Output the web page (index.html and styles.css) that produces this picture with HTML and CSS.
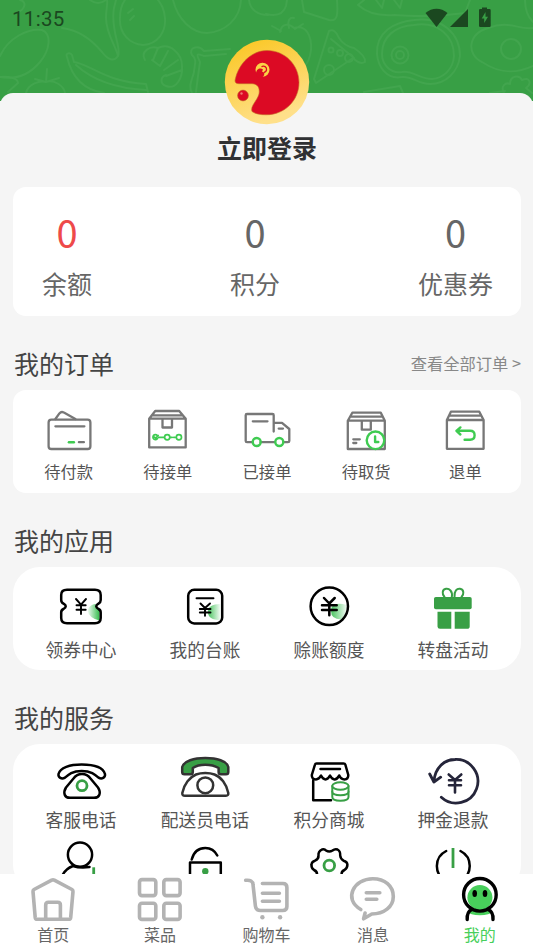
FILE: index.html
```html
<!DOCTYPE html>
<html lang="zh-CN">
<head>
<meta charset="utf-8">
<title>我的</title>
<link rel="stylesheet" href="styles.css">
</head>
<body>
<div class="screen">
  <header class="hero">
    <svg class="pattern" viewBox="0 0 533 101" fill="none">
      <path d="M0 56C8 38 28 28 42 30C52 34 50 50 40 62C30 74 16 80 0 77"/>
      <path d="M62 28C78 30 92 40 102 52C108 60 114 62 118 56C116 46 106 34 106 18C106 8 108 4 107 0M118 56C122 48 110 30 114 8L116 0"/>
      <path d="M120 18C119 34 130 44 143 45C158 44 166 32 165 18C164 8 161 4 158 0M120 18C120 8 122 4 125 0M128 13L133 9M130 20L134 16"/>
      <path d="M173 0C178 20 192 33 207 33C224 32 240 20 241 0M249 0C250 10 258 15 268 15"/>
      <path d="M67 57C65 53 70 52 72 55L74 62C90 64 105 82 146 84L148 92M67 57C72 78 84 90 104 93M76 65C88 76 108 88 146 90"/>
      <path d="M145 60C140 52 150 45 158 48C170 42 182 54 182 66C183 78 176 90 166 86C160 84 160 77 166 75M158 48L153 60M168 51L160 66L152 60M178 60L164 70M182 70L166 76"/>
      <path d="M230 49L204 51C198 44 188 48 192 55C198 60 194 66 194 72C192 80 188 86 192 93M226 54L204 56C198 54 195 52 200 62L198 76L196 92"/>
      <path d="M26 93C28 84 40 80 46 82C54 79 64 86 65 93M35 79L46 82L59 78M46 82L47 69M0 77C8 76 18 78 18 83L8 92M20 0C28 2 24 10 18 12M90 0Q98 6 106 0"/>
      <path d="M280 32C282 22 290 24 294 28C306 24 312 36 311 50C310 58 307 64 304 66M289 28C287 20 290 17 294 18M281 31L272 26M295 29L303 24"/>
      <path d="M329 31Q335 28 339 38Q344 46 354 48Q366 56 365 62Q360 65 353 58L316 83L314 79Z M331 39L354 58"/>
      <circle cx="349" cy="58" r="4"/><circle cx="329" cy="70" r="5"/><circle cx="340" cy="53" r="3"/><circle cx="331" cy="50" r="2.5"/>
      <path d="M377 54C376 32 394 22 414 20C442 16 460 34 460 56C458 72 446 84 430 84C418 84 412 76 402 77C386 80 378 66 377 54Z M382 54C382 36 396 26 414 25C438 21 454 36 454 56C453 70 443 78 432 79C420 79 412 70 402 72C390 74 382 64 382 54Z"/>
      <circle cx="400" cy="55" r="8.500"/><circle cx="400" cy="55" r="4"/>
      <path d="M533 28C518 30 510 20 488 28C468 34 466 54 482 62C500 74 516 74 533 66"/><circle cx="511" cy="49" r="10"/>
      <path d="M358 5C368 14 380 16 394 15Q430 18 465 13L470 0M358 5L364 0M376 0L382 8L384 0M394 0L400 8L402 0M302 0L304 12L329 20C338 22 338 14 337 0M266 14Q282 18 286 6L287 0"/>
      <path d="M364 92L400 86L403 93M504 93C500 86 506 82 510 84C510 76 519 74 522 80C530 76 532 84 526 88L532 93M490 93L505 91M525 0Q525 14 533 22"/>
    </svg>
    <div class="status">
      <span class="clock">11:35</span>
      <svg class="signals" width="68" height="22" viewBox="425 6 68 22" fill="#1b4820">
        <path d="M426.500 13C433 7.300 442 7.300 448.500 13L437.500 27Z"/>
        <path d="M469 9V27H451Z"/>
        <path fill-rule="evenodd" d="M483 7.500H488V9H490.500Q491.700 9 491.700 10.200V25.800Q491.700 27 490.500 27H481.200Q480 27 480 25.800V10.200Q480 9 481.200 9H483ZM486.500 12L482.700 18.500H485.200V23L489 16.700H486.500Z"/>
      </svg>
    </div>
  </header>

  <main class="sheet">
    <div class="profile">
      <svg class="avatar" width="86" height="86" viewBox="224 39 86 86">
        <defs><linearGradient id="gold" x1="0" y1="0" x2=".4" y2="1"><stop offset="0" stop-color="#fac51c"/><stop offset="1" stop-color="#ffe08a"/></linearGradient></defs>
        <circle cx="267" cy="82" r="42.200" fill="url(#gold)"/>
        <path fill="#dc0a24" stroke="#c66b28" stroke-width=".6" d="M235.300 79C239 63 252 50.500 267 50.500C285 50.500 299 65 299 82.500C299 101 284 115 266 114.800C260 114.800 255 113.800 252 111.500C250 106 257 101 259 94C260 88 258 84 252 83.700H239C235.500 83.700 234.500 82 235.300 79Z"/>
        <circle cx="243" cy="95.500" r="5.400" fill="#dc0a24" stroke="#bd6828" stroke-width=".6"/>
        <circle cx="241.500" cy="93.500" r="1.200" fill="#ef7770"/>
        <circle cx="262.500" cy="69.800" r="7" fill="#fad347"/>
        <path fill="#dc0a24" d="M256 73.500C256 69 260.500 67 263 69.500L262 71.500L264 72.500C265.500 76 261 79.500 258 77.500C256.500 76.500 256 75 256 73.500Z"/>
        <path fill="none" stroke="#dc0a24" stroke-width="1.300" d="M261.500 66.800C264 65.200 267 67 266.500 70C266.200 71.500 265.300 72.300 264 72.500"/>
      </svg>
      <h1 class="login">立即登录</h1>
    </div>

    <section class="card stats">
      <div class="stat stat-hot"><b>0</b><span>余额</span></div>
      <div class="stat"><b>0</b><span>积分</span></div>
      <div class="stat"><b>0</b><span>优惠券</span></div>
    </section>

    <div class="heading"><h2>我的订单</h2><a class="more">查看全部订单 &gt;</a></div>
    <section class="card orders">
      <div class="cell">
        <svg class="ico gray" viewBox="38.600 400 60 60"><path d="M55 419L59 413.400Q61 411 63.500 412.600L75 419"/><rect x="48.200" y="419.700" width="41.800" height="29.300" rx="2.800"/><path d="M55 426.300H84M78.500 442.200H83.500"/><path class="g" d="M68.500 442.200H73.500"/></svg>
        <span>待付款</span>
      </div>
      <div class="cell">
        <svg class="ico gray" viewBox="137.800 400 60 60"><path d="M149 418.700L155 411H179L185.500 418.700V447.400H149ZM149 418.700H185.500M152.500 415.300H182M162.300 418.700V427.500H171.800V418.700"/><path class="g thin" d="M157 435.300A2.500 2.500 0 1 0 157.300 438.500M154 437L155.500 438L158 435.500M158.500 437.300H164M170 437.300H172M173.500 437.300H175"/><g class="g thin"><circle cx="167" cy="437.300" r="2.600"/><circle cx="178.700" cy="437.300" r="2.600"/></g></svg>
        <span>待接单</span>
      </div>
      <div class="cell">
        <svg class="ico gray" viewBox="237 400 60 60"><path d="M252.500 442.200H247Q245.700 442.200 245.700 441V415.200Q245.700 414 247 414H272.500Q273.700 414 273.700 415.200V431.500M260.500 442.200H275M273.700 422.800H282L289.300 429V441Q289.300 442.200 288 442.200H283.500M252.800 421.300H267.500M278.700 428.600H283"/><g class="g"><circle cx="256.700" cy="442" r="4"/><circle cx="279.300" cy="442" r="4"/></g></svg>
        <span>已接单</span>
      </div>
      <div class="cell">
        <svg class="ico gray" viewBox="336.200 400 60 60"><path d="M348 420.700L352.500 412.700H381L385 420.700V449H348ZM348 420.700H385M351 416.700H382M362 420.700V429.700H371V420.700M353.500 439.300H360M353.500 443H356.500"/><circle class="g" cx="375.700" cy="440.300" r="8.800" fill="#fff"/><path class="g" d="M375.300 436.500V442H378.500"/></svg>
        <span>待取货</span>
      </div>
      <div class="cell">
        <svg class="ico gray" viewBox="435.400 400 60 60"><path d="M447.300 420L451.300 411.700H479.700L484 420V448.800H447.300ZM447.300 420H484M450 415.700H481.500"/><path class="g" d="M460.800 427.400L456.800 430.800L460.800 434.500M457 430.800H470.500Q475 430.800 475 435.200Q475 439.700 470.500 439.700H465"/></svg>
        <span>退单</span>
      </div>
    </section>

    <div class="heading"><h2>我的应用</h2></div>
    <section class="card round apps">
      <div class="cell">
        <svg class="ico" viewBox="51 576 60 60">
          <defs>
            <linearGradient id="glow"><stop offset="0" stop-color="#35bd4d" stop-opacity=".05"/><stop offset="1" stop-color="#35bd4d"/></linearGradient>
            <linearGradient id="glowBack"><stop offset="0" stop-color="#35bd4d" stop-opacity=".9"/><stop offset="1" stop-color="#35bd4d" stop-opacity=".05"/></linearGradient>
          </defs>
          <path fill="url(#glow)" stroke="none" d="M95.500 604Q90 604.500 87.500 610Q88.500 618 99.500 620.500V611L96 606.500Z"/>
          <path d="M67 589.800H95Q100.700 589.800 100.700 595V600Q100.700 602.500 98.500 603.700Q94 606.300 98.500 609Q100.700 610 100.700 612.500V618Q100.700 623.200 95 623.200H67Q61.200 623.200 61.200 618V612.500Q61.200 610 63.500 609Q68 606.300 63.500 603.700Q61.200 602.500 61.200 600V595Q61.200 589.800 67 589.800Z"/>
          <path d="M76 599L81 604.700L86 599M81 604.700V614M76.500 605.300H85.700M76.500 609.700H85.700" stroke-width="1.900"/>
        </svg>
        <span>领券中心</span>
      </div>
      <div class="cell">
        <svg class="ico" viewBox="175 576 60 60">
          <path fill="url(#glowBack)" stroke="none" d="M220.500 604Q208 604 208 612Q208 620 220.500 620Z"/>
          <rect x="188.200" y="589.800" width="34" height="33.600" rx="6"/>
          <path d="M196.500 598.300H213.500M200.500 603.500L205 608L210 603.500M205 608V615.700M199.800 609H210.500M199.800 612.500H210.500" stroke-width="1.900"/>
        </svg>
        <span>我的台账</span>
      </div>
      <div class="cell">
        <svg class="ico" viewBox="299 576 60 60">
          <path fill="url(#glowBack)" stroke="none" d="M347 605Q331 601 331 611Q331 619 341 619.500Q346 616 347 605Z"/>
          <circle cx="329.300" cy="606.300" r="18.700"/>
          <path d="M324 598L329.300 603.500L334.700 598M329.300 603.500V615.300M322 605.300H336.700M322 610H336.700" stroke-width="2.500"/>
        </svg>
        <span>赊账额度</span>
      </div>
      <div class="cell">
        <svg class="ico" viewBox="423 576 60 60"><g fill="#389f45" stroke="none"><rect x="434" y="597" width="37.700" height="12.300" rx="1.800"/><path d="M437.500 611.700H451.300V628.800H440Q437.500 628.800 437.500 626.500ZM454.700 611.700H469.700V626.500Q469.700 628.800 467 628.800H454.700Z"/></g><path stroke="#389f45" stroke-width="2" d="M451.800 597C453 591 449 588.300 446 588.800C442 589.500 441.800 594 444.500 597M454.500 597C454 591 457 588.300 460 588.800C464 589.500 464.300 594 461.500 597"/></svg>
        <span>转盘活动</span>
      </div>
    </section>

    <div class="heading"><h2>我的服务</h2></div>
    <section class="card round services">
      <div class="cell">
        <svg class="ico" viewBox="51 748 60 60"><path d="M58.500 774C60 767.500 70 764.500 81.700 764.500S103 767.500 105 774C105.500 777.500 102 779.700 98.500 777.700C95 774.500 91 771 81.700 771S68.500 774.500 65 777.700C61.500 779.700 58 777.500 58.500 774Z"/><path d="M82 774C86.500 774 88.500 775.700 90.500 778.500L98 787.500C101.500 793 99.500 797.800 94 797.800H70C64.500 797.800 62.700 793 66 787.500L73.500 778.500C75.500 775.700 77.500 774 82 774Z"/><circle class="leaf" cx="82" cy="785.700" r="5"/></svg>
        <span>客服电话</span>
      </div>
      <div class="cell">
        <svg class="ico dark" viewBox="175 748 60 60"><path fill="#389f45" d="M182.200 772V767C184 761 194 758 205.300 758S227 761 228.300 767V772Q228.300 774.300 226 774.300H221Q218.600 774.300 218.600 772V768Q213 764.800 205.300 764.800T192.800 768V772Q192.800 774.300 190.500 774.300H184.500Q182.200 774.300 182.200 772Z"/><path d="M182.300 793C184 784 190 777 196 774.500Q200 773 205.300 773T214.500 774.500C221 777 226.500 784 228.300 793Q228.500 795.700 226 795.700H185Q182 795.700 182.300 793Z"/><circle cx="205.300" cy="785.300" r="7.900"/></svg>
        <span>配送员电话</span>
      </div>
      <div class="cell">
        <svg class="ico" viewBox="299 748 60 60"><path d="M316.500 763.400H343.500Q345 763.400 345.300 764.500L348.300 775Q348.300 779.400 344.500 779.400Q341 779.400 339.300 775.500Q337 779.400 334.500 779.400T330 775.500Q328 779.400 325.500 779.400T321 775.500Q319 779.400 316 779.400Q311.700 779.400 311.800 775L315 764.500Q315.300 763.400 316.500 763.400ZM320.500 768.900H340M313.200 780.500V800.300H331"/><g stroke="#389f45" stroke-width="2" fill="#fff"><path d="M332.300 786V797C332.300 802 348.500 802 348.500 797V786"/><path d="M332.300 791.500C332.300 796.400 348.500 796.400 348.500 791.500"/><ellipse cx="340.400" cy="786" rx="8.100" ry="3.700"/></g></svg>
        <span>积分商城</span>
      </div>
      <div class="cell">
        <svg class="ico navy" viewBox="423 748 60 60"><path d="M433.900 781.500C435 767.500 444.500 759.500 455 759.500A21.800 21.800 0 1 1 441.300 797.300M429.700 774L433.900 782L440.700 777.200" stroke-width="2.800"/><path d="M448.700 774.500L455 780L461.300 774.500M455 780V792.500M449 780.300H461M449 785.300H461"/></svg>
        <span>押金退款</span>
      </div>
      <div class="cell">
        <svg class="ico" viewBox="51 832 60 60"><circle cx="80" cy="854.700" r="12.100"/><path d="M62.500 875Q66 868.500 73 866Q80 868.300 89.500 867"/><path class="leaf" stroke-linecap="butt" d="M93.700 867.300V880"/></svg>
      </div>
      <div class="cell">
        <svg class="ico" viewBox="175 832 60 60"><path d="M191.700 859.500C194 851 199 848 205.300 848S215 851 217.300 855.500M190 885V862.600H220.800V885"/><circle cx="205.300" cy="871.200" r="3.200" fill="#389f45" stroke="none"/></svg>
      </div>
      <div class="cell">
        <svg class="ico" viewBox="299 832 60 60"><path d="M317 875Q317.500 871.500 314 870Q311 868 311.500 864.500Q311.800 861.500 315 860.700Q318.700 859 318.500 855.500Q318 851.500 322 849.500Q324.500 848.500 326 850.500Q329.300 852.500 332.500 850.500Q335 848.500 337.500 849.500Q340.500 851 340.200 855.500Q340.500 859 343.500 860.700Q347.200 861.500 347.400 864.500Q347.500 868 344.500 870Q341 871.500 341.700 875"/><circle class="leaf" cx="329.300" cy="865.500" r="5.300"/></svg>
      </div>
      <div class="cell">
        <svg class="ico" viewBox="423 832 60 60"><path d="M446.200 851A16.800 16.800 0 0 0 446 881M460.500 851A16.800 16.800 0 0 1 460.500 881"/><path class="leaf" stroke-linecap="butt" d="M453 848V868"/></svg>
      </div>
    </section>
  </main>

  <nav class="tabs">
    <div class="tab">
      <svg class="tab-ico" viewBox="28.300 874 50 50"><path d="M33.300 891.500Q33.100 890.300 34.300 889.500L52 880.200Q53.300 879.600 54.600 880.200L72.300 889.500Q73.500 890.300 73.300 891.500L71 917.500Q70.800 919.300 69 919.300H37.500Q35.700 919.300 35.500 917.500ZM46 919V905Q46 902.300 48.700 902.300H58Q60.700 902.300 60.700 905V919"/></svg>
      <span>首页</span>
    </div>
    <div class="tab">
      <svg class="tab-ico" viewBox="135 874 50 50"><rect x="139.500" y="879.600" width="16.300" height="16" rx="2.500"/><rect x="163.800" y="879.600" width="16.300" height="16" rx="2.500"/><rect x="139.500" y="903.200" width="16.300" height="16.200" rx="2.500"/><rect x="163.800" y="903.200" width="16.300" height="16.200" rx="2.500"/></svg>
      <span>菜品</span>
    </div>
    <div class="tab">
      <svg class="tab-ico" viewBox="241.600 874 50 50"><path d="M246.300 880.300Q253.300 879.500 253.600 884.500L256 906Q256.500 910.500 261 910.500H283.300Q287.500 910.500 287.500 906.500V887.500Q287.500 883.500 283.500 883.500H263M263 893.300H280M263 901.300H280"/><circle class="dot" cx="263" cy="917.300" r="2.200"/><circle class="dot" cx="280.700" cy="917.300" r="2.200"/></svg>
      <span>购物车</span>
    </div>
    <div class="tab">
      <svg class="tab-ico" viewBox="348.200 874 50 50"><path d="M361 909.500C343 899 354 878.700 373 878.700C385 878.700 393.500 886 393.500 896.500C393.500 907 384 914 372 914L363.800 918.800L365.300 913"/><path d="M366.500 892.700H380M366.500 899.300H377"/></svg>
      <span>消息</span>
    </div>
    <div class="tab tab-active">
      <svg class="tab-ico" viewBox="454.800 874 50 50"><ellipse cx="479.700" cy="912" rx="11.500" ry="3.200" fill="#48cf5b" stroke="none"/><circle cx="479.700" cy="897.500" r="12.500" fill="#48cf5b" stroke="none"/><g stroke="#000" stroke-width="3.400"><circle cx="479.700" cy="894.800" r="16.300"/><path d="M467 919.500Q466.500 912 471.500 909.500M492.800 919.500Q493.300 912 488 909.500"/></g><g fill="#000" stroke="none"><ellipse cx="474.500" cy="893.500" rx="2.300" ry="3.600"/><ellipse cx="484.800" cy="893.500" rx="2.300" ry="3.600"/></g></svg>
      <span>我的</span>
    </div>
  </nav>
</div>
</body>
</html>
```
FILE: styles.css
```css
* { box-sizing: border-box; }
body {
  margin: 0;
  background: #f5f5f5;
  font-family: "Noto Sans CJK SC", sans-serif;
  font-weight: 400;
}
h1, h2 { margin: 0; }
.screen {
  display: flex;
  flex-direction: column;
  width: 533px;
  height: 948px;
  overflow: hidden;
}
.hero {
  position: relative;
  flex: none;
  height: 101px;
  background: #389f45;
}
.pattern {
  position: absolute;
  inset: 0;
  width: 533px;
  height: 101px;
  stroke: #42a54e;
  stroke-width: 2;
  stroke-linecap: round;
  stroke-linejoin: round;
}
.status {
  position: relative;
  display: flex;
  justify-content: space-between;
  padding: 6px 41px 0 12px;
}
.clock {
  font: 400 20.5px/26px Roboto, sans-serif;
  letter-spacing: .3px;
  color: #1b4820;
}
.sheet {
  position: relative;
  flex: 1;
  min-height: 0;
  margin-top: -8px;
  padding: 0 12px 0 13px;
  border-radius: 13px 13px 0 0;
  background: #f5f5f5;
}
.profile {
  display: flex;
  flex-direction: column;
  align-items: center;
  height: 148px;
  margin-top: -54px;
}
.avatar { flex: none; }
.login {
  margin-top: 4px;
  font-size: 25px;
  line-height: 36px;
  font-weight: 700;
  color: #303133;
}
.card {
  border-radius: 13px;
  background: #fff;
}
.round { border-radius: 27px; }
.stats {
  display: flex;
  justify-content: space-between;
  height: 129px;
  padding: 22px 28px 0 29px;
}
.stat {
  display: flex;
  flex-direction: column;
  align-items: center;
  color: #666;
}
.stat b {
  font-size: 38px;
  line-height: 46px;
  font-weight: 400;
}
.stat span {
  margin-top: 10px;
  font-size: 25px;
  line-height: 36px;
}
.stat-hot b { color: #ee4a4a; }
.heading {
  display: flex;
  align-items: center;
  justify-content: space-between;
  height: 74px;
  padding: 20px 0 0 1px;
}
.heading h2 {
  font-size: 25px;
  line-height: 38px;
  font-weight: 400;
  color: #444;
}
.more {
  font-size: 16.3px;
  line-height: 24px;
  color: #888;
}
.orders {
  display: grid;
  grid-template-columns: repeat(5, 1fr);
  height: 103px;
  padding: 10px 6px 0;
}
.apps, .services {
  display: grid;
  grid-template-columns: repeat(4, 1fr);
  padding: 9px 6px 0;
}
.apps { height: 103px; }
.services { padding-top: 4px; }
.cell {
  display: flex;
  flex-direction: column;
  align-items: center;
  color: #555;
}
.cell span {
  margin-top: -1px;
  margin-bottom: 1px;
  font-size: 17.7px;
  line-height: 24px;
  white-space: nowrap;
}
.orders .cell span { font-size: 16.3px; }
.apps .cell span { margin-top: 1px; }
.ico {
  display: block;
  flex: none;
  width: 60px;
  height: 60px;
  fill: none;
  stroke: #000;
  stroke-width: 2.5;
  stroke-linecap: round;
  stroke-linejoin: round;
}
.gray { stroke: #777; stroke-width: 2.3; }
.dark { stroke: #333; }
.navy { stroke: #25253a; stroke-width: 2.6; }
.g { stroke: #3fcb51; stroke-width: 2.4; }
.thin { stroke-width: 1.7; }
.leaf { stroke: #389f45; stroke-width: 2.8; }
.tabs {
  position: relative;
  flex: none;
  display: grid;
  grid-template-columns: repeat(5, 1fr);
  height: 74px;
  background: #fff;
}
.tab {
  display: flex;
  flex-direction: column;
  align-items: center;
  color: #666;
}
.tab span {
  margin-top: -1px;
  font-size: 16px;
  line-height: 22px;
}
.tab-active span { color: #48cf5b; }
.tab-ico {
  display: block;
  flex: none;
  width: 50px;
  height: 50px;
  fill: none;
  stroke: #b3b3b3;
  stroke-width: 3.6;
  stroke-linecap: round;
  stroke-linejoin: round;
}
.dot { fill: #b3b3b3; stroke: none; }
```
